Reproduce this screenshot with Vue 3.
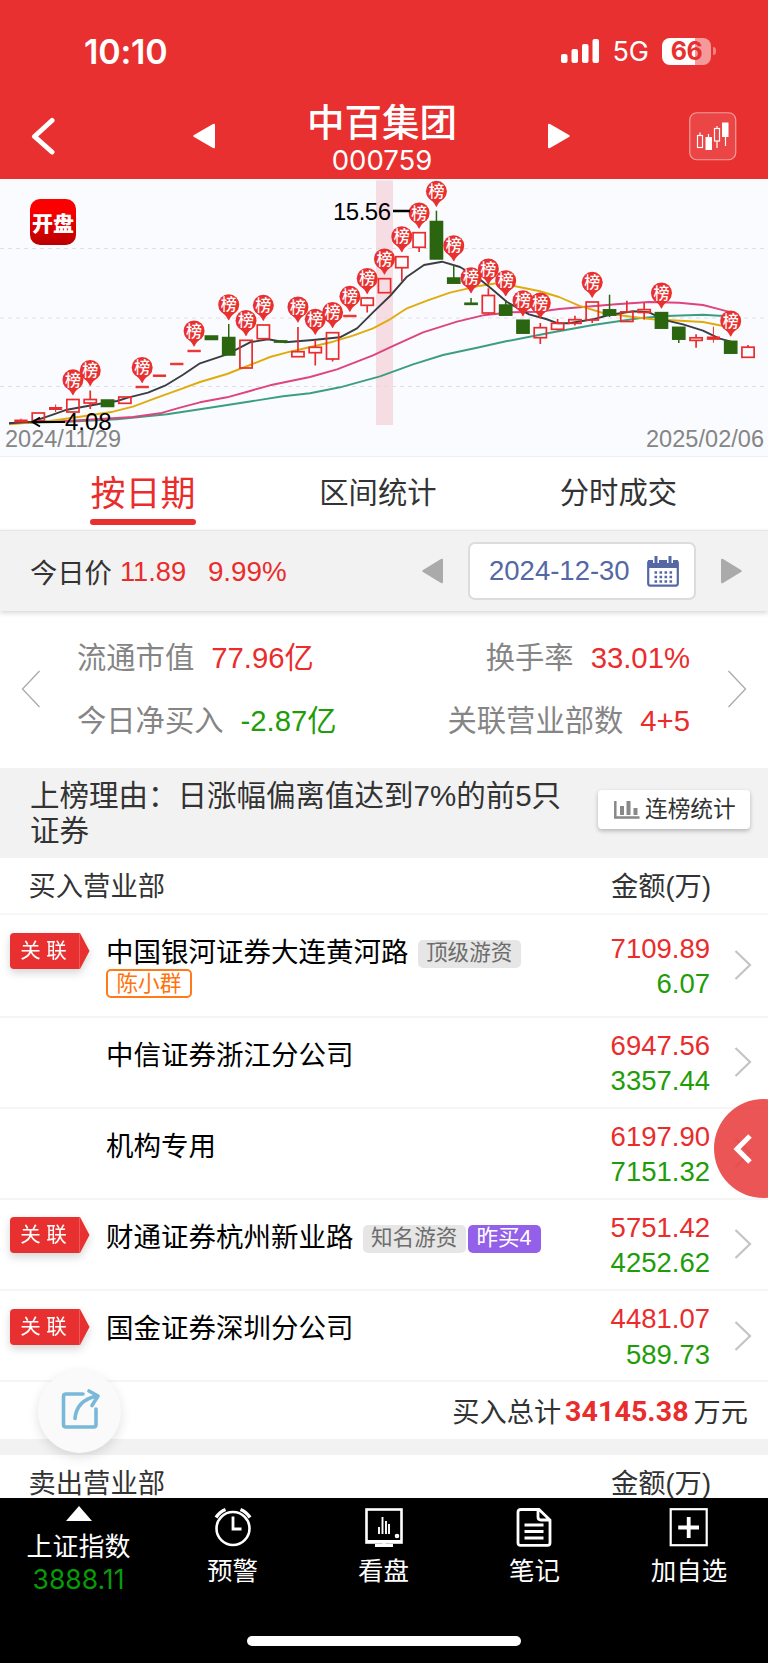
<script setup>
const STEP = 17.31
const cx = (i) => 21 + STEP * i

// kind (r = hollow up, f = filled up, g = down), body top, body bottom, high, low
const candles = [
  ['f', 420, 422, 418.5, 422], ['r', 413, 420.5], ['f', 407.5, 409.5, 404.5, 412], ['r', 399.5, 412],
  ['r', 399.5, 403, 390.5, 409], ['g', 400, 406.5], ['r', 397, 403.3], ['f', 386.3, 387.7], ['f', 375, 376.4],
  ['f', 363.3, 364.7], ['f', 350.3, 351.7], ['g', 336, 339.5], ['g', 337.5, 355, 324, 355], ['r', 340.3, 368],
  ['r', 325, 338.7], ['g', 340.9, 342.1], ['r', 351.7, 356.7, 327, 357], ['r', 347.3, 352.7, 340, 365.5],
  ['r', 332.7, 359, 332, 361.5], ['f', 315.3, 316.7], ['r', 298, 305.3, 297, 312.5], ['r', 278.7, 292.7],
  ['r', 256.7, 267.7, 256, 281], ['r', 232.7, 247.3, 232, 252], ['g', 221.5, 259, 210.7, 259],
  ['g', 278, 283.2, 265.3, 283], ['g', 303.2, 304.4, 298, 304], ['r', 295.5, 313, 288.3, 315],
  ['g', 305, 315.2, 300, 315], ['g', 320.2, 333.2], ['r', 327.7, 337.7, 323, 344], ['r', 323.3, 329.3, 319, 330.5],
  ['r', 319.7, 323.3, 315.7, 325.5], ['r', 302, 320, 302, 323], ['g', 309.8, 315.2, 294.7, 317],
  ['r', 311.9, 321.5, 300.7, 321], ['r', 309.6, 312.4, 302.7, 319.5], ['g', 312.6, 328.2], ['g', 327.3, 339.2, 327, 343],
  ['r', 337.8, 340.4, 334.3, 347.7], ['f', 337, 339.3, 326.7, 342.7], ['g', 341.3, 353.2], ['r', 347.2, 357.3, 345, 357],
].map(([kind, top, bottom, high, low], i) => ({ kind, top, bottom, high, low, x: cx(i) }))

const pins = [
  [3, 379.8], [4, 370.5], [7, 367.5], [10, 331], [12, 304.7], [13, 320.5], [14, 305.3], [16, 307], [17, 319.3],
  [18, 312.5], [19, 296.3], [20, 278.5], [21, 259], [22, 236.7], [23, 213], [24, 191.3], [25, 245.7], [26, 277.7],
  [27, 269], [28, 280.7], [29, 300.7], [30, 303], [33, 282.3], [37, 293], [41, 321],
].map(([i, y]) => ({ x: cx(i), y }))

const averages = [
  ['#3c9e80', '9,423.3 67,421.7 117,419.3 167,414.3 200,409.3 250,401.5 283,396.3 310,393.3 340,387.3 380,376.3 413,364.3 443,355 477,347.7 506,341.3 549,333 593,325 639,318.3 666,316 703,314.7 719,315.7 732,315.7'],
  ['#dd4480', '9,423.3 67,421 133,417 160,413.3 180,407.7 200,402.3 227,397.3 250,391 270,385.3 310,377 337,369.3 373,355.3 390,347.3 423,332.3 457,321.7 483,315.3 512,312.3 539,311.7 559,309 586,306.7 616,304.3 649,302 679,302.7 703,305 718,308.8 732,312.7'],
  ['#dfac0c', '9,424.3 50,421 80,416.7 113,411.7 133,406.7 157,397.7 180,389.3 200,382 227,374 250,365 270,357 290,351.7 333,341.7 353,335.7 373,328.3 390,319.3 407,308.3 427,300.7 450,292.7 477,286.3 497,283.3 514,286 539,291 559,297 579,305.7 603,313 639,317.7 653,319.3 703,322 732,327.7'],
  ['#3b3d42', '9,423.3 32,421.7 50,415.7 67,409.7 100,403.7 117,401 128,397.7 148,392.7 165,385.7 183,374.7 200,363.3 227,354.3 250,342.3 268,339.3 285,342.3 313,340 340,337.3 357,328.3 373,312.3 390,296 407,276.7 424,265 442,261.7 460,267 477,277 493,290 507,302 529,314.3 546,319 558,323.3 569,323.3 593,319.3 609,315 633,311.3 649,312.3 666,320.3 683,324.3 703,330.7 719,338.3 731,341.7'],
]

const buyers = [
  { linked: true, name: '中国银河证券大连黄河路', tags: [['顶级游资', 'gray'], ['陈小群', 'orange']], buy: '7109.89', sell: '6.07', tall: true },
  { name: '中信证券浙江分公司', tags: [], buy: '6947.56', sell: '3357.44' },
  { name: '机构专用', tags: [], buy: '6197.90', sell: '7151.32' },
  { linked: true, name: '财通证券杭州新业路', tags: [['知名游资', 'gray'], ['昨买4', 'purple']], buy: '5751.42', sell: '4252.62' },
  { linked: true, name: '国金证券深圳分公司', tags: [], buy: '4481.07', sell: '589.73' },
]
</script>

<template>
  <div class="screen">
    <header class="header">
      <div class="status">
        <span class="time">10:10</span>
        <div class="status-right">
          <svg class="signal" width="40" height="24" viewBox="0 0 40 24" fill="#fff">
            <rect x="0" y="15" width="6.500" height="9" rx="2" /><rect x="10.500" y="10" width="6.500" height="14" rx="2" />
            <rect x="21" y="5" width="6.500" height="19" rx="2" /><rect x="31.500" y="0" width="6.500" height="24" rx="2" />
          </svg>
          <span class="net">5G</span>
          <div class="battery"><span>66</span></div>
          <i class="battery-tip"></i>
        </div>
      </div>
      <div class="titlebar">
        <svg class="back" width="28" height="40" viewBox="0 0 28 40"><path d="M25 4.500 7.500 20.500 25 36" fill="none" stroke="#fff" stroke-width="5" stroke-linecap="round" stroke-linejoin="round" /></svg>
        <svg class="prev" width="22" height="26" viewBox="0 0 22 26"><path d="M1 12 20 1Q22 0 22 2V24Q22 26 20 25L1 14Q-.5 13 1 12Z" fill="#fff" /></svg>
        <div class="title"><h1>中百集团</h1><p>000759</p></div>
        <svg class="next" width="22" height="26" viewBox="0 0 22 26"><path d="M21 12 2 1Q0 0 0 2V24Q0 26 2 25L21 14Q22.500 13 21 12Z" fill="#fff" /></svg>
        <svg class="kline" width="48" height="49" viewBox="0 0 48 49">
          <rect x=".75" y=".75" width="46" height="47" rx="7" fill="#fff" fill-opacity=".1" stroke="#fff" stroke-opacity=".5" stroke-width="1.2" />
          <g fill="none" stroke="#fff" stroke-width="1.2"><rect x="8.500" y="23.500" width="5" height="12" /><path d="M11 20.500v3M19.500 22v4M28 14v2.500M28 29v7M36.500 24v10" /><rect x="25.500" y="16.500" width="5" height="12.500" /></g>
          <g fill="#fff"><rect x="16.500" y="25" width="6.500" height="13" /><rect x="33" y="10.500" width="6.500" height="14.500" /></g>
        </svg>
      </div>
    </header>

    <section class="chart">
      <svg width="768" height="277" viewBox="0 179 768 277">
        <rect x="376" y="180.500" width="17" height="244.500" fill="#f6dde3" />
        <g stroke="#dedfe4" stroke-width="1.2" stroke-dasharray="4 4"><path d="M0 248.500H768M0 318H768M0 386.500H768" /></g>
        <polyline v-for="[color, points] in averages" :key="color" :points="points" :stroke="color" fill="none" stroke-width="1.900" stroke-linejoin="round" />
        <g v-for="(c, i) in candles" :key="i" :class="['candle', c.kind]">
          <template v-if="c.high">
            <path v-if="c.high < c.top" :d="`M${c.x} ${c.high}V${c.top}`" />
            <path v-if="c.low > c.bottom" :d="`M${c.x} ${c.bottom}V${c.low}`" />
          </template>
          <rect :x="c.x - 6.100" :y="c.top" width="12.200" :height="c.bottom - c.top" />
        </g>
        <g v-for="(p, i) in pins" :key="i" :transform="`translate(${p.x} ${p.y})`">
          <path d="M-9.400 4.500C-6 8.500-3 10-.6 15Q0 16 .6 15C3 10 6 8.500 9.400 4.500Z" fill="#e93030" />
          <circle r="10.500" fill="#e93030" />
          <text class="pin-text" y="5.700" text-anchor="middle">榜</text>
        </g>
        <path d="M65 422H33M40 417.500 32.500 422 40 426.500" fill="none" stroke="#000" stroke-width="2" />
        <path d="M393 211H410" stroke="#000" stroke-width="2.500" />
        <text class="price" x="65" y="430">4.08</text>
        <text class="price" x="333" y="219.500" textLength="58">15.56</text>
        <text class="date" x="5" y="447" textLength="116">2024/11/29</text>
        <text class="date" x="646" y="447" textLength="118">2025/02/06</text>
      </svg>
      <div class="logo">开盘</div>
    </section>

    <nav class="tabs">
      <span class="tab active">按日期</span>
      <span class="tab">区间统计</span>
      <span class="tab">分时成交</span>
    </nav>

    <section class="daybar">
      <span class="label">今日价</span><span class="red now">11.89</span><span class="red pct">9.99%</span>
      <svg class="dayprev" width="21" height="26" viewBox="0 0 21 26"><path d="M1 12 19 1Q21 0 21 2V24Q21 26 19 25L1 14Q-.5 13 1 12Z" fill="#aaa" /></svg>
      <div class="picker">
        <span>2024-12-30</span>
        <svg width="32" height="31" viewBox="0 0 32 31">
          <rect x="1.200" y="5" width="29.600" height="24.600" rx="2" fill="#fff" stroke="#5468a6" stroke-width="2.200" />
          <path d="M1 4h30v8H1z" fill="#5468a6" />
          <path d="M9 0v7M23 0v7" stroke="#fff" stroke-width="6" /><path d="M9 0v7M23 0v7" stroke="#5468a6" stroke-width="3" />
          <path d="M7.500 16.500h18M7.500 21h18M7.500 25.500h18" stroke="#5468a6" stroke-width="2.500" stroke-dasharray="2.600 2.400" />
        </svg>
      </div>
      <svg width="21" height="26" viewBox="0 0 21 26"><path d="M20 12 2 1Q0 0 0 2V24Q0 26 2 25L20 14Q21.500 13 20 12Z" fill="#aaa" /></svg>
    </section>

    <section class="stats">
      <svg width="20" height="38" viewBox="0 0 20 38"><path d="M18.500 1 1.500 19 18.500 37" fill="none" stroke="#aaa" stroke-width="1.300" /></svg>
      <div class="stat-rows">
        <div><span>流通市值<b class="red">77.96亿</b></span><span>换手率<b class="red">33.01%</b></span></div>
        <div><span>今日净买入<b class="green">-2.87亿</b></span><span>关联营业部数<b class="red">4+5</b></span></div>
      </div>
      <svg width="20" height="38" viewBox="0 0 20 38"><path d="M1.500 1 18.500 19 1.500 37" fill="none" stroke="#aaa" stroke-width="1.300" /></svg>
    </section>

    <section class="reason">
      <p>上榜理由：日涨幅偏离值达到7%的前5只<br />证券</p>
      <div class="streak">
        <svg width="26" height="20" viewBox="0 0 26 20" fill="none" stroke="#888"><path d="M1.300 1V17.500H25.500" stroke-width="2.500" /><path d="M8 6v9M14.500 1v14M21.500 8v7" stroke-width="4" /></svg>
        <span>连榜统计</span>
      </div>
    </section>

    <div class="thead"><span>买入营业部</span><span>金额(万)</span></div>
    <div v-for="b in buyers" :key="b.name" :class="['row', { tall: b.tall }]">
      <div class="linkcell">
        <div v-if="b.linked" class="link"><span>关 联</span><svg width="11" height="36" viewBox="0 0 11 36"><path d="M0 0 1 0 10.500 18 1 36H0Z" fill="#e93030" /><path d="M.5 0V36" stroke="#f06464" stroke-width=".8" /></svg></div>
      </div>
      <div class="name"><span class="nm">{{ b.name }}</span><span v-for="[t, k] in b.tags" :key="t" :class="['tag', k]">{{ t }}</span></div>
      <div class="amount"><span class="red">{{ b.buy }}</span><span class="green">{{ b.sell }}</span></div>
      <svg class="go" width="18" height="32" viewBox="0 0 18 32"><path d="M1.500 2 16 16 1.500 30" fill="none" stroke="#c4c4c4" stroke-width="2.200" /></svg>
    </div>
    <div class="total"><span>买入总计</span><b>34145.38</b><span>万元</span></div>
    <div class="gap"></div>
    <div class="thead"><span>卖出营业部</span><span>金额(万)</span></div>

    <div class="share">
      <svg width="40" height="41" viewBox="0 0 40 41" fill="none" stroke="#7ab8d9" stroke-width="3.600" stroke-linecap="round" stroke-linejoin="round">
        <path d="M22 5H5Q2.500 5 2.500 7.500V35.500Q2.500 38 5 38H32.500Q35 38 35 35.500V20" /><path d="M14 29.500Q15.500 11.500 35.500 7M28 2 37 7 31 16.500" />
      </svg>
    </div>
    <div class="drawer">
      <svg width="20" height="32" viewBox="0 0 20 32"><path d="M18 3 5 16 18 29" fill="none" stroke="#fff" stroke-width="5" /></svg>
    </div>

    <footer class="bottom">
      <div class="items">
        <div class="index">
          <svg width="26" height="15" viewBox="0 0 26 15"><path d="M13 0 26 15H0Z" fill="#fff" /></svg>
          <span>上证指数</span><em>3888.11</em>
        </div>
        <div class="item">
          <svg width="40" height="40" viewBox="0 0 40 40" fill="none" stroke="#fff" stroke-width="2.600"><circle cx="20" cy="21.500" r="16.500" /><path d="M20 9.500V22h8.500" stroke-width="2.800" /><path d="M3 10.500Q6.500 5 12.500 2.500M37 10.500Q33.500 5 27.500 2.500" stroke-width="3.400" /></svg>
          <span>预警</span>
        </div>
        <div class="item">
          <svg width="40" height="40" viewBox="0 0 40 40" fill="none" stroke="#fff" stroke-width="2.600"><rect x="2.500" y="2.500" width="35" height="33" /><path d="M2 34.500H38M20 35v3M11 38.500H29" stroke-width="3" /><path d="M15 20v7M18.500 10v17M22 14v13M25 17v10" stroke-width="1.900" /><circle cx="33" cy="29" r="1" /></svg>
          <span>看盘</span>
        </div>
        <div class="item">
          <svg width="40" height="40" viewBox="0 0 40 40" fill="none" stroke="#fff" stroke-width="2.800"><path d="M6 2.500H24L35 13V36Q35 38.300 32.500 38.300H5.500Q3 38.300 3 36V5Q3 2.500 6 2.500ZM23 2.500V10Q23 13 26 13H35M9.500 18H28.500M9.500 24.500H28.500M9.500 31H28.500" /></svg>
          <span>笔记</span>
        </div>
        <div class="item">
          <svg width="40" height="40" viewBox="0 0 40 40" fill="none" stroke="#fff" stroke-width="2.200"><rect x="1.700" y="2.200" width="36" height="36" /><path d="M19.700 10V31M9.200 20.500H30" stroke-width="3.800" /></svg>
          <span>加自选</span>
        </div>
      </div>
      <i class="home"></i>
    </footer>
  </div>
</template>

<style>
body { background: #fff; }
</style>

<style scoped>
.screen { position: relative; width: 768px; height: 1663px; overflow: hidden; background: #fff; color: #333; font-family: "Liberation Sans", "Noto Sans CJK SC", sans-serif; }
.screen * { box-sizing: border-box; }
svg { display: block; flex: none; }
.red { color: #ea2c2c; }
.green { color: #1f9d09; }
h1, p { margin: 0; font-weight: 400; }

.header { height: 179px; background: #e93030; color: #fff; }
.status { display: flex; justify-content: space-between; height: 93px; padding: 9px 52px 0 84px; align-items: center; font-family: Inter, sans-serif; }
.time { padding-top: 1px; font-size: 34px; font-weight: 600; letter-spacing: -.2px; }
.status-right { display: flex; align-items: center; }
.net { margin: 0 13px 0 11px; padding-top: 2px; font-size: 27px; line-height: 28px; font-weight: 400; }
.battery { width: 49px; height: 27px; border-radius: 8px; background: linear-gradient(90deg, #fff 0 33px, #f59a9a 33px); color: #e93030; font-size: 25px; line-height: 27px; font-weight: 700; text-align: center; letter-spacing: -.5px; }
.battery-tip { width: 3px; height: 8px; margin-left: 2px; border-radius: 0 3px 3px 0; background: #f28080; }
.titlebar { display: flex; align-items: center; height: 86px; padding: 0 31px 0 27px; }
.back { margin-right: 138px; }
.prev { margin-right: 87px; }
.title { width: 160px; padding-top: 2px; text-align: center; }
.title h1 { font: 500 37.500px/44px "Noto Sans CJK SC", sans-serif; white-space: nowrap; }
.title p { padding-top: 3px; font: 400 27.500px/31px Inter, sans-serif; }
.next { margin-left: 86px; }
.kline { margin-left: auto; }

.chart { position: relative; height: 278px; background: #fafbff; border-bottom: 1px solid #eff0f4; }
.candle { stroke: #ea2c2c; stroke-width: 1.700; fill: none; }
.candle.f { fill: #ea2c2c; stroke-width: 1; }
.candle.g { stroke: #2b6510; fill: #2b6510; stroke-width: 1.500; }
.pin-text { font: 500 16px "Noto Sans CJK SC", sans-serif; fill: #fff; }
.price { font-size: 24px; fill: #000; }
.date { font-size: 23.500px; fill: #858585; }
.logo { position: absolute; left: 30px; top: 20px; width: 46px; height: 46px; border-radius: 10px; background: linear-gradient(#fb0000 25%, #b90000); color: #fff; font: 900 21px/46px "Noto Sans CJK SC", sans-serif; text-align: center; }

.tabs { display: flex; height: 73px; padding: 0 91px 0 90px; justify-content: space-between; font-size: 29.300px; line-height: 71px; white-space: nowrap; }
.tab.active { position: relative; height: 68px; color: #ea2c2c; font-size: 35px; line-height: 74px; width: 106px; text-align: center; }
.tab.active::after { content: ""; position: absolute; left: 0; right: 0; bottom: 0; height: 6px; border-radius: 3px; background: #e93030; }
.tab:nth-child(2) { margin-left: 0; }

.daybar { display: flex; align-items: center; height: 81px; padding: 0 26px 0 30px; background: #f2f2f2; border-top: 1px solid #e6e6e6; box-shadow: 0 2px 5px rgba(0, 0, 0, .16); font-size: 27.300px; }
.label { padding-bottom: 1px; }
.now { margin-left: 8px; width: 81px; padding-top: 1px; }
.pct { margin-left: 7px; padding-top: 1px; font-size: 27.800px; }
.dayprev { margin-left: auto; }
.picker { display: flex; align-items: center; justify-content: space-between; width: 228px; height: 58px; margin: 0 25px; padding: 0 15px 0 19px; border: 2px solid #dcdcdc; border-radius: 7px; background: #fff; color: #5468a6; font-size: 27.500px; }

.stats { display: flex; align-items: center; height: 157px; padding: 0 21px 2px; color: #858585; font-size: 29.300px; }
.stat-rows { flex: 1; padding: 0 37px 0 36px; }
.stat-rows div { display: flex; justify-content: space-between; height: 63px; line-height: 63px; }
.stat-rows b { margin-left: 17px; font-weight: 400; }

.reason { display: flex; justify-content: space-between; height: 90px; padding: 10px 18px 0 30px; background: #f2f2f2; font-size: 29.500px; line-height: 35px; white-space: nowrap; }
.streak { display: flex; align-items: center; gap: 5px; width: 152px; height: 39px; margin-top: 12px; padding-left: 16px; border-radius: 4px; background: #fff; box-shadow: 0 2px 4px rgba(0, 0, 0, .25); font-size: 22.700px; }

.thead { display: flex; justify-content: space-between; height: 57px; padding: 0 57px 0 28.500px; border-bottom: 2px solid #f6f6f6; font-size: 27.300px; line-height: 57px; }
.row { display: flex; height: 91.200px; border-bottom: 2px solid #f5f5f5; color: #000; }
.row.tall { height: 102.500px; }
.linkcell { width: 97px; padding: 17.500px 0 0 10px; }
.link { display: flex; width: 80px; filter: drop-shadow(0 4px 4px rgba(0, 0, 0, .16)); }
.link span { width: 70px; height: 36px; padding-right: 3px; border-radius: 4px 0 0 4px; background: #e93030; color: #fff; font-size: 20.500px; line-height: 36px; text-align: center; }
.link svg { margin-left: -1px; }
.name { flex: 1; display: flex; flex-wrap: wrap; align-content: flex-start; align-items: flex-start; padding: 20px 0 0 9px; font-size: 27.500px; line-height: 36px; }
.nm { margin-right: 9px; }
.tag { height: 28px; margin-top: 5px; padding: 0 8.500px; border-radius: 5px; font-size: 21.600px; line-height: 26px; margin-right: 2px; }
.tag.gray { background: #e6e6e6; color: #6d6d6d; }
.tag.purple { padding-right: 9px; background: #945fe9; color: #fff; }
.tag.orange { margin-top: -2px; border: 2px solid #ff7a1a; color: #ff730c; height: 29px; line-height: 25px; }
.amount { display: flex; flex-direction: column; justify-content: center; width: 100px; padding-top: 2px; text-align: right; font-size: 27.500px; line-height: 35.500px; }
.go { align-self: center; margin: 0 16px 0 24px; }
.total { display: flex; align-items: center; justify-content: flex-end; height: 57px; padding: 0 20px 0 0; font-size: 27.200px; }
.total span { padding-bottom: 2px; }
.total b { margin: 0 5px 0 4px; padding-top: 1px; color: #e92c2c; font: 700 28.500px Roboto, sans-serif; letter-spacing: .1px; }
.gap { height: 16px; background: #f2f2f2; }

.share { position: absolute; left: 38px; top: 1370px; display: flex; width: 83px; height: 83px; padding: 19px 0 0 23px; border-radius: 50%; background: #fafafa; box-shadow: 0 4px 12px rgba(0, 0, 0, .12); }
.drawer { position: absolute; left: 714px; top: 1099px; display: flex; align-items: center; width: 99px; height: 99px; padding-left: 18px; border-radius: 50%; background: rgba(233, 60, 60, .87); }

.bottom { position: absolute; left: 0; right: 0; bottom: 0; height: 165px; background: #000; color: #fff; }
.items { display: grid; grid-template-columns: 157px 151px 151px 151px 158px; height: 138px; }
.index, .item { display: flex; flex-direction: column; align-items: center; font-size: 25.500px; }
.index { padding-top: 8px; }
.index span { margin-top: 8px; line-height: 36px; font-size: 26px; }
.index em { margin-top: -1px; color: #079b07; font: 400 26.500px/30px Inter, sans-serif; }
.item { padding-top: 9px; }
.item span { margin-top: 6px; line-height: 36px; }
.home { display: block; width: 274px; height: 10px; margin: 0 auto; border-radius: 5px; background: #fff; }
</style>
